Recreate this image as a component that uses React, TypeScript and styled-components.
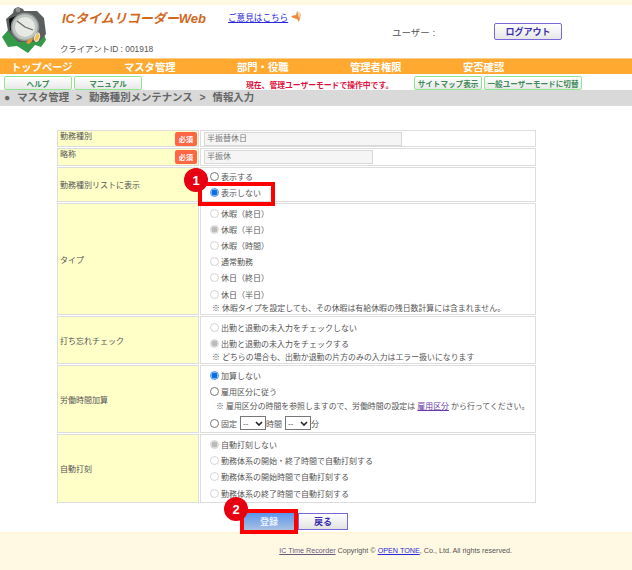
import React from 'react';
import styled, { createGlobalStyle } from 'styled-components';

const GlobalStyle = createGlobalStyle`
  html, body { margin: 0; padding: 0; background: #fff; }
  body {
    font-family: "Liberation Sans", "Noto Sans CJK JP", sans-serif;
    font-size: 8px;
    color: #555;
  }
`;

const TYPE_OPTIONS = ['休暇（終日）', '休暇（半日）', '休暇（時間）', '通常勤務', '休日（終日）', '休日（半日）'];
const STAMP_OPTIONS = ['自動打刻しない', '勤務体系の開始・終了時間で自動打刻する', '勤務体系の開始時間で自動打刻する', '勤務体系の終了時間で自動打刻する'];

function Logo() {
  return (
    <svg width="54" height="53" viewBox="0 5 54 53">
      <path d="M2 37 L9 29 L44 34 L46 40 L41 47 L35 45 L28 53 L17 46 L8 47 Z" fill="#35994a" />
      <path d="M6 19 L13 13 L14 9 L18 7 L23 9 L24 11 L37 11 L44 18 L46 34 L39 42 L18 42 L8 31 Z" fill="#5a5e5f" />
      <path d="M9 19 L20 14 L20 38 L10 30 Z" fill="#0d0d0d" />
      <circle cx="18" cy="10" r="2.4" fill="#8b8f8d" />
      <circle cx="25" cy="27" r="13.5" fill="#bfc6c2" stroke="#8b9290" strokeWidth="1.5" />
      <circle cx="25" cy="27" r="10" fill="#e6e9e4" />
      <path d="M25 27 L17 21 M25 27 L33 30" stroke="#6a6a6a" strokeWidth="1.3" />
      <path d="M26 43 Q30 37 33 39 Q32 42 29 44 Z" fill="#e89a2c" />
      <path d="M34 39 Q36 32 39 33 Q41 36 38 41 Q35 43 34 39 Z" fill="#f2c04c" stroke="#fff" strokeWidth="0.8" />
    </svg>
  );
}

function FeedbackIcon() {
  return (
    <svg width="10" height="12" viewBox="0 0 10 12">
      <path d="M0 5 L5 4 L6 0 L10 3 L8 11 L6 8 L2 7 Z" fill="#f08a3c" />
      <path d="M6 0 L10 3 L8 7 Z" fill="#f8d9b0" />
    </svg>
  );
}

function SelectCaret() {
  return (
    <Caret viewBox="0 0 8 5">
      <path d="M1 1 L4 4 L7 1" />
    </Caret>
  );
}

export default function App() {
  return (
    <Page>
      <GlobalStyle />
      <TopStrip />
      <Header>
        <LogoSlot><Logo /></LogoSlot>
        <TitleBlock>
          <TitleRow>
            <AppTitle>ICタイムリコーダーWeb</AppTitle>
            <FeedbackLink>ご意見はこちら</FeedbackLink>
            <FeedbackIcon />
          </TitleRow>
          <ClientId>クライアントID : 001918</ClientId>
        </TitleBlock>
        <UserLabel>ユーザー :</UserLabel>
        <LogoutButton>ログアウト</LogoutButton>
      </Header>
      <Nav>
        <NavItem $w={113}>トップページ</NavItem>
        <NavItem $w={113}>マスタ管理</NavItem>
        <NavItem $w={113}>部門・役職</NavItem>
        <NavItem $w={113}>管理者権限</NavItem>
        <NavItem $w={110}>安否確認</NavItem>
      </Nav>
      <SubBar>
        <GreenButton $w={68}>ヘルプ</GreenButton>
        <GreenButton $w={68}>マニュアル</GreenButton>
        <Notice>現在、管理ユーザーモードで操作中です。</Notice>
        <GreenButton $w={68}>サイトマップ表示</GreenButton>
        <GreenButton $w={98}>一般ユーザーモードに切替</GreenButton>
      </SubBar>
      <Breadcrumb>● マスタ管理 &gt; 勤務種別メンテナンス &gt; 情報入力</Breadcrumb>

      <Main>
        <FormGrid>
          <Label $h={17}>
            <LabelText>勤務種別</LabelText><Required>必須</Required>
          </Label>
          <Value $h={17}><TextBox $w={198}>半振替休日</TextBox></Value>

          <Label $h={18}>
            <LabelText>略称</LabelText><Required>必須</Required>
          </Label>
          <Value $h={18}><TextBox $w={169}>半振休</TextBox></Value>

          <Label $h={35} $center>勤務種別リストに表示</Label>
          <Value $h={35}>
            <Options>
              <Option><RadioMark $state="off" />表示する</Option>
              <Option><RadioMark $state="on" />表示しない</Option>
            </Options>
            <Badge $top={0} $left={-17}>1</Badge>
            <Highlight $top={14} $left={-3} $w={77} $h={24} />
          </Value>

          <Label $h={112} $center>タイプ</Label>
          <Value $h={112} $top={1}>
            <Options>
              {TYPE_OPTIONS.map((o, i) => (
                <Option key={o} $h={16.2}>
                  <RadioMark $state={i === 1 ? 'disabledOn' : 'disabled'} />{o}
                </Option>
              ))}
              <Note>※ 休暇タイプを設定しても、その休暇は有給休暇の残日数計算には含まれません。</Note>
            </Options>
          </Value>

          <Label $h={48} $center>打ち忘れチェック</Label>
          <Value $h={48} $top={2}>
            <Options>
              <Option $h={16}><RadioMark $state="disabled" />出勤と退勤の未入力をチェックしない</Option>
              <Option $h={16}><RadioMark $state="disabledOn" />出勤と退勤の未入力をチェックする</Option>
              <Note>※ どちらの場合も、出勤か退勤の片方のみの入力はエラー扱いになります</Note>
            </Options>
          </Value>

          <Label $h={68} $center>労働時間加算</Label>
          <Value $h={68} $top={1}>
            <Options>
              <Option $h={16}><RadioMark $state="on" />加算しない</Option>
              <Option $h={16}><RadioMark $state="off" />雇用区分に従う</Option>
              <NoteWide>※ 雇用区分の時間を参照しますので、労働時間の設定は <DocLink>雇用区分</DocLink> から行ってください。</NoteWide>
              <Option $h={16}>
                <RadioMark $state="off" />固定
                <TimeSelect>--<SelectCaret /></TimeSelect>時間
                <TimeSelect>--<SelectCaret /></TimeSelect>分
              </Option>
            </Options>
          </Value>

          <Label $h={69} $center>自動打刻</Label>
          <Value $h={69} $top={1}>
            <Options>
              {STAMP_OPTIONS.map((o, i) => (
                <Option key={o} $h={16.3}>
                  <RadioMark $state={i === 0 ? 'disabledOn' : 'disabled'} />{o}
                </Option>
              ))}
            </Options>
          </Value>
        </FormGrid>

        <Actions>
          <SubmitWrap>
            <Badge $top={-16} $left={-19}>2</Badge>
            <Highlight $top={-4} $left={-3} $w={58} $h={25} />
            <SubmitButton>登録</SubmitButton>
          </SubmitWrap>
          <BackButton>戻る</BackButton>
        </Actions>
      </Main>

      <Footer>
        <FooterText>
          <FooterMuted>IC Time Recorder</FooterMuted> Copyright © <FooterLink>OPEN TONE</FooterLink>, Co., Ltd. All rights reserved.
        </FooterText>
      </Footer>
    </Page>
  );
}

const Page = styled.div`
  width: 632px;
  height: 570px;
  overflow: hidden;
  background: #fff;
  display: flex;
  flex-direction: column;
`;

const TopStrip = styled.div`
  height: 5px;
  background: #fff9e3;
`;

const Header = styled.header`
  height: 53px;
  display: flex;
`;

const LogoSlot = styled.div`
  width: 60px;
  flex: none;
`;

const TitleBlock = styled.div`
  width: 332px;
  flex: none;
  display: flex;
  flex-direction: column;
`;

const TitleRow = styled.div`
  display: flex;
  align-items: center;
  height: 24px;
  padding-left: 2px;
`;

const AppTitle = styled.div`
  font-weight: bold;
  font-style: italic;
  font-size: 13px;
  color: #d2691e;
  width: 166px;
  white-space: nowrap;
`;

const FeedbackLink = styled.a`
  font-size: 8.6px;
  color: #2a2ad8;
  text-decoration: underline;
  margin-right: 3px;
`;

const ClientId = styled.div`
  margin-top: 13px;
  font-size: 8.4px;
  color: #555;
`;

const UserLabel = styled.div`
  width: 102px;
  padding-top: 20px;
  font-size: 9.5px;
  color: #555;
`;

const LogoutButton = styled.div`
  width: 68px;
  height: 17px;
  margin-top: 18px;
  box-sizing: border-box;
  border: 1px solid #7b68d8;
  border-radius: 2px;
  background: linear-gradient(#fff, #e6e6e6);
  color: #3a2fb0;
  font-weight: bold;
  font-size: 9px;
  display: flex;
  align-items: center;
  justify-content: center;
`;

const Nav = styled.nav`
  height: 16px;
  box-sizing: border-box;
  border-top: 1px solid #ffd08a;
  background: #ffa930;
  display: flex;
  align-items: center;
  padding-left: 11px;
`;

const NavItem = styled.div<{ $w: number }>`
  width: ${p => p.$w}px;
  color: #fff;
  font-weight: bold;
  font-size: 10.3px;
`;

const SubBar = styled.div`
  height: 16px;
  display: flex;
  align-items: flex-start;
  padding: 2px 0 0 4px;
  box-sizing: border-box;
  gap: 2px;
`;

const GreenButton = styled.div<{ $w: number }>`
  width: ${p => p.$w}px;
  height: 14px;
  flex: none;
  box-sizing: border-box;
  border: 1px solid #8fe88f;
  border-radius: 2px;
  background: linear-gradient(#fff, #e8e8e8);
  color: #3f8a5a;
  font-weight: bold;
  font-size: 7.6px;
  white-space: nowrap;
  display: flex;
  align-items: center;
  justify-content: center;
`;

const Notice = styled.div`
  width: 268px;
  flex: none;
  box-sizing: border-box;
  padding: 3px 0 0 102px;
  color: #e0103c;
  font-size: 7.8px;
  font-weight: bold;
  white-space: nowrap;
`;

const Breadcrumb = styled.div`
  height: 16px;
  background: #d9d9d9;
  padding-left: 4px;
  font-weight: bold;
  font-size: 10.4px;
  word-spacing: 4px;
  line-height: 16px;
  color: #666;
`;

const Main = styled.main`
  flex: 1;
  padding: 24px 0 0 57px;
  display: flex;
  flex-direction: column;
`;

const FormGrid = styled.div`
  width: 479px;
  display: grid;
  grid-template-columns: 142px 336px;
  gap: 1px;
`;

const Label = styled.div<{ $h: number; $center?: boolean }>`
  height: ${p => p.$h}px;
  box-sizing: border-box;
  background: #ffffc8;
  border: 1px solid #ddd;
  padding-left: 2px;
  display: flex;
  align-items: ${p => (p.$center ? 'center' : 'flex-start')};
  font-size: 8px;
  color: #555;
  position: relative;
`;

const LabelText = styled.span`
  line-height: 12px;
`;

const Required = styled.span`
  position: absolute;
  right: 1px;
  top: 1px;
  width: 22px;
  height: 14px;
  border-radius: 2px;
  background: #ff6644;
  color: #fff;
  font-weight: bold;
  font-size: 7.2px;
  display: flex;
  align-items: center;
  justify-content: center;
`;

const Value = styled.div<{ $h: number; $top?: number }>`
  height: ${p => p.$h}px;
  box-sizing: border-box;
  border: 1px solid #ddd;
  padding: ${p => p.$top ?? 0}px 0 0 3px;
  position: relative;
  display: flex;
  align-items: ${p => (p.$top === undefined ? 'center' : 'flex-start')};
`;

const TextBox = styled.div<{ $w: number }>`
  width: ${p => p.$w}px;
  height: 14px;
  background: #f5f5f5;
  border: 1px solid #d8d8d8;
  box-sizing: border-box;
  padding-left: 2px;
  font-size: 8px;
  line-height: 12px;
  color: #777;
`;

const Options = styled.div`
  display: flex;
  flex-direction: column;
  padding-left: 6px;
  width: 100%;
`;

const Option = styled.div<{ $h?: number }>`
  height: ${p => p.$h ?? 16}px;
  display: flex;
  align-items: center;
  font-size: 8px;
  white-space: nowrap;
  color: #555;
`;

const RadioMark = styled.span<{ $state: 'off' | 'on' | 'disabled' | 'disabledOn' }>`
  width: 9px;
  height: 9px;
  margin-right: 2px;
  flex: none;
  border-radius: 50%;
  box-sizing: border-box;
  background: ${p =>
    p.$state === 'on'
      ? 'radial-gradient(circle, #0a6fe0 0 2.8px, #fff 3.3px)'
      : p.$state === 'disabledOn'
        ? 'radial-gradient(circle, #bbb 0 2.8px, #f2f2f2 3.3px)'
        : '#fff'};
  border: 1px solid
    ${p => (p.$state === 'on' ? '#3b8ae8' : p.$state === 'off' ? '#777' : '#d4d4d4')};
`;

const Note = styled.div`
  height: 13px;
  line-height: 13px;
  padding-left: 2px;
  font-size: 7.9px;
  white-space: nowrap;
  color: #555;
`;

const NoteWide = styled(Note)`
  padding-left: 6px;
  height: 16px;
  line-height: 16px;
`;

const DocLink = styled.a`
  color: #6a3aa8;
  text-decoration: underline;
`;

const TimeSelect = styled.span`
  width: 26px;
  height: 14px;
  margin-left: 3px;
  box-sizing: border-box;
  border: 1px solid #777;
  padding: 0 2px;
  display: inline-flex;
  align-items: center;
  justify-content: space-between;
  font-size: 8px;
`;

const Caret = styled.svg`
  width: 8px;
  height: 5px;
  fill: none;
  stroke: #222;
  stroke-width: 1.6;
`;

const Badge = styled.span<{ $top: number; $left: number }>`
  position: absolute;
  top: ${p => p.$top}px;
  left: ${p => p.$left}px;
  width: 24px;
  height: 24px;
  border-radius: 50%;
  background: #e60012;
  color: #fff;
  font-weight: bold;
  font-size: 13px;
  display: flex;
  align-items: center;
  justify-content: center;
  z-index: 2;
`;

const Highlight = styled.span<{ $top: number; $left: number; $w: number; $h: number }>`
  position: absolute;
  top: ${p => p.$top}px;
  left: ${p => p.$left}px;
  width: ${p => p.$w}px;
  height: ${p => p.$h}px;
  box-sizing: border-box;
  border: 4px solid #f00;
  z-index: 1;
`;

const Actions = styled.div`
  margin: 10px 0 0 186px;
  display: flex;
  gap: 3px;
`;

const SubmitWrap = styled.div`
  position: relative;
  width: 52px;
`;

const SubmitButton = styled.div`
  height: 17px;
  background: linear-gradient(#5b95ee, #a9c0e0);
  color: #e8f0ff;
  font-weight: bold;
  font-size: 9px;
  display: flex;
  align-items: center;
  justify-content: center;
`;

const BackButton = styled.div`
  width: 50px;
  height: 17px;
  box-sizing: border-box;
  border: 1px solid #7b68d8;
  background: linear-gradient(#fff, #e2e2e2);
  color: #3a2fb0;
  font-weight: bold;
  font-size: 9px;
  display: flex;
  align-items: center;
  justify-content: center;
`;

const Footer = styled.footer`
  height: 38px;
  background: #fff9e3;
  border-top: 1px solid #fff3d0;
  display: flex;
  justify-content: flex-end;
  padding: 13px 120px 0 0;
  box-sizing: border-box;
`;

const FooterText = styled.div`
  font-size: 7.2px;
  color: #555;
  white-space: nowrap;
`;

const FooterMuted = styled.span`
  color: #6a5a80;
  text-decoration: underline;
`;

const FooterLink = styled.a`
  color: #2a2ad8;
  text-decoration: underline;
`;
